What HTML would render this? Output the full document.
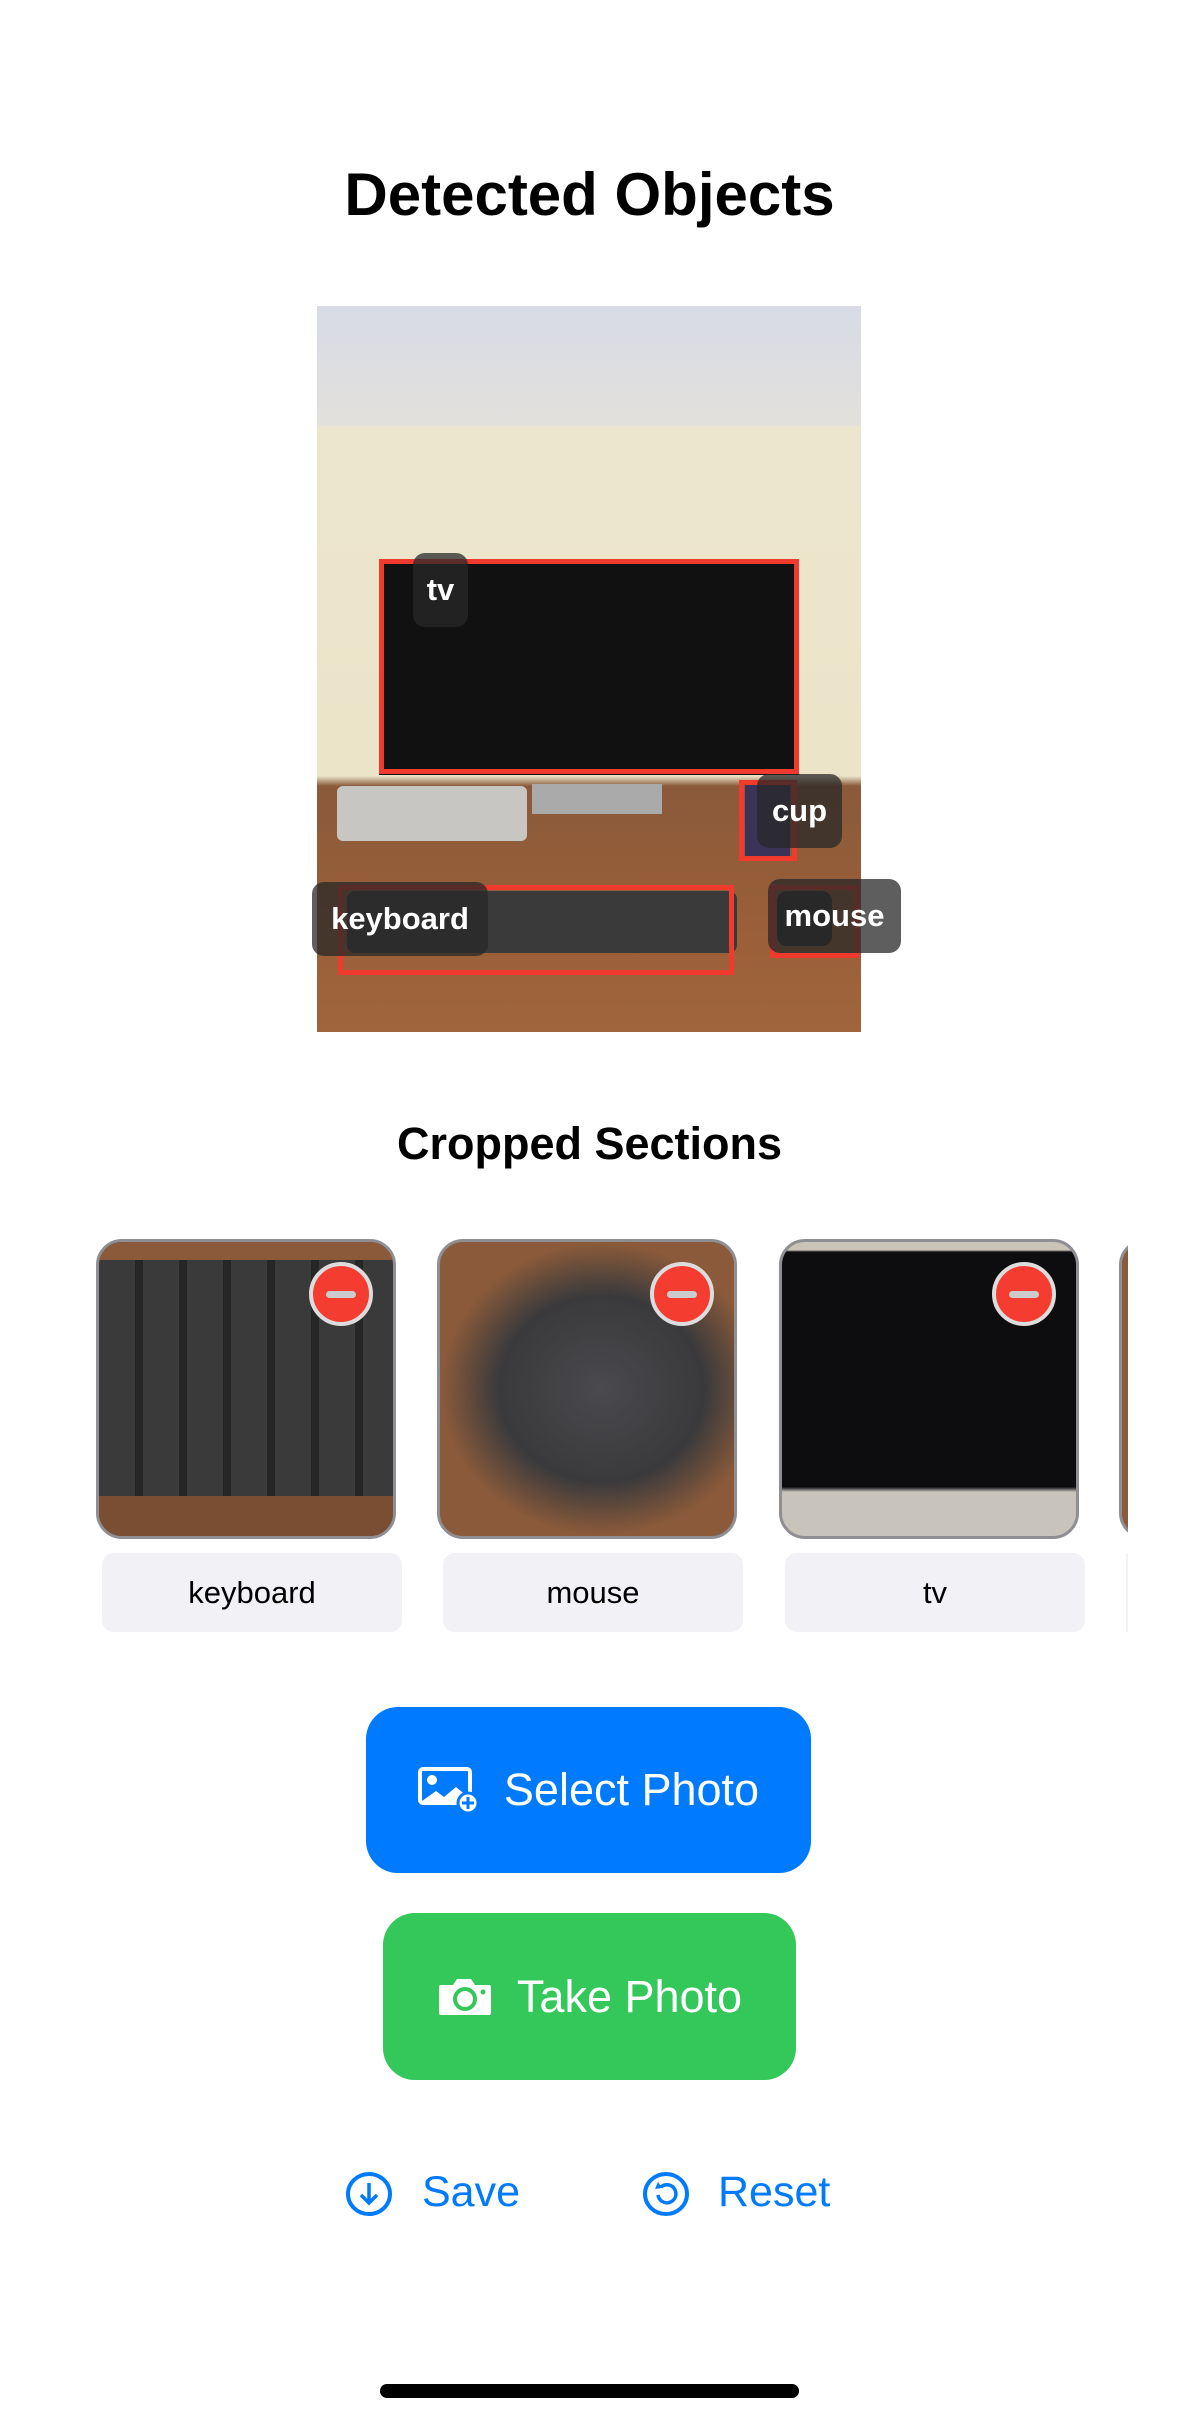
<!DOCTYPE html>
<html><head><meta charset="utf-8"><style>
*{margin:0;padding:0;box-sizing:border-box}
body{width:1179px;height:2425px;background:#fff;position:relative;overflow:hidden;font-family:"Liberation Sans",sans-serif}
.a{position:absolute}
.lbl{position:absolute;background:rgba(40,40,40,.75);color:#fff;font-weight:bold;font-size:31px;border-radius:12px;display:flex;align-items:center;justify-content:center}
.box{position:absolute;border:5px solid #f03a2e}
.th{position:absolute;top:1239px;width:300px;height:300px;border-radius:26px;border:3px solid #8e8e93;overflow:hidden}
.rm{position:absolute;right:20px;top:20px;width:64px;height:64px;border-radius:50%;background:#f53c31;border:4px solid #ddd}
.rm:after{content:"";position:absolute;left:13px;top:25px;width:30px;height:7px;border-radius:4px;background:#ccc}
.tl{position:absolute;top:1553px;width:300px;height:79px;background:#f1f1f6;border-radius:12px;font-size:31px;display:flex;align-items:center;justify-content:center;color:#000}
.btn{position:absolute;border-radius:32px;color:#fff;font-size:45px;display:flex;align-items:center;justify-content:center;gap:24px}
</style></head><body>
<div class="a" style="top:160px;width:1179px;text-align:center;font-size:60px;font-weight:bold">Detected Objects</div>

<div class="a" style="left:317px;top:306px;width:544px;height:726px;overflow:hidden;background:linear-gradient(#d8dbe6 0,#e2e0dc 118px,#ede6cf 122px,#ebe4c8 470px,#8a5a3a 480px,#9a5f38 620px,#a0653c 726px)">
  <div class="a" style="left:62px;top:253px;width:420px;height:216px;background:#111"></div>
  <div class="a" style="left:20px;top:480px;width:190px;height:55px;background:#c8c6c2;border-radius:6px"></div>
  <div class="a" style="left:215px;top:478px;width:130px;height:30px;background:#aaa"></div>
  <div class="a" style="left:30px;top:585px;width:390px;height:62px;background:#3a3a3a;border-radius:8px"></div>
  <div class="a" style="left:460px;top:585px;width:55px;height:55px;background:#2a2a2a;border-radius:10px"></div>
  <div class="a" style="left:428px;top:478px;width:45px;height:75px;background:#3b3458"></div>
</div>
<div class="box" style="left:379px;top:559px;width:420px;height:215px"></div>
<div class="lbl" style="left:413px;top:553px;width:55px;height:74px">tv</div>
<div class="box" style="left:739px;top:780px;width:58px;height:81px"></div>
<div class="lbl" style="left:757px;top:774px;width:85px;height:74px">cup</div>
<div class="box" style="left:338px;top:885px;width:396px;height:90px"></div>
<div class="lbl" style="left:312px;top:882px;width:176px;height:74px">keyboard</div>
<div class="box" style="left:770px;top:885px;width:89px;height:73px"></div>
<div class="lbl" style="left:768px;top:879px;width:133px;height:74px">mouse</div>

<div class="a" style="top:1118px;width:1179px;text-align:center;font-size:45px;font-weight:bold">Cropped Sections</div>

<div class="th" style="left:96px;background:repeating-linear-gradient(90deg,#3a3a3a 0,#3a3a3a 36px,#262626 36px,#262626 44px),#333"><div class="a" style="left:0;top:0;width:300px;height:18px;background:#8a5a3a"></div><div class="a" style="left:0;bottom:0;width:300px;height:40px;background:#7a4e33"></div><div class="rm"></div></div>
<div class="th" style="left:437px;background:radial-gradient(ellipse at 55% 50%,#4a4a4e 0,#3a3a3c 45%,#8a5a3a 70%)"><div class="rm"></div></div>
<div class="th" style="left:779px;background:linear-gradient(#c9c3b8 0,#c9c3b8 8px,#0d0d10 10px,#0d0d10 245px,#c8c4bc 250px)"><div class="rm"></div></div>
<div class="th" style="left:1119px;background:#8a5a3a"></div>
<div class="a" style="left:1128px;top:1230px;width:51px;height:420px;background:#fff"></div>

<div class="tl" style="left:102px">keyboard</div>
<div class="tl" style="left:443px">mouse</div>
<div class="tl" style="left:785px">tv</div>
<div class="tl" style="left:1126px;width:2px"></div>

<div class="btn" style="left:366px;top:1707px;width:445px;height:166px;background:#007aff">
<svg width="62" height="46" viewBox="0 0 62 46"><rect x="2" y="2" width="50" height="34" rx="3" fill="none" stroke="#fff" stroke-width="4"/><circle cx="14" cy="13" r="5" fill="#fff"/><path d="M4 34 L18 24 L26 30 L38 20 L50 30 L50 34Z" fill="#fff"/><circle cx="50" cy="36" r="10" fill="#fff" stroke="#007aff" stroke-width="3"/><path d="M50 30v12M44 36h12" stroke="#007aff" stroke-width="3"/></svg>
<span>Select Photo</span></div>
<div class="btn" style="left:383px;top:1913px;width:413px;height:167px;background:#34c759">
<svg width="56" height="40" viewBox="0 0 56 40"><path d="M4 8h12l4-6h14l4 6h14a2 2 0 0 1 2 2v26a2 2 0 0 1-2 2H4a2 2 0 0 1-2-2V10a2 2 0 0 1 2-2z" fill="#fff"/><circle cx="28" cy="22" r="10" fill="none" stroke="#34c759" stroke-width="4"/><circle cx="46" cy="15" r="2.5" fill="#34c759"/></svg>
<span>Take Photo</span></div>

<svg class="a" style="left:345px;top:2171px" width="48" height="46" viewBox="0 0 48 46"><ellipse cx="24" cy="23" rx="21" ry="20" fill="none" stroke="#007aff" stroke-width="4"/><path d="M24 12v20M16 24l8 8 8-8" fill="none" stroke="#007aff" stroke-width="3.5"/></svg>
<div class="a" style="left:422px;top:2168px;font-size:43px;color:#007aff">Save</div>
<svg class="a" style="left:642px;top:2171px" width="48" height="46" viewBox="0 0 48 46"><ellipse cx="24" cy="23" rx="21" ry="20" fill="none" stroke="#007aff" stroke-width="4"/><path d="M19 16a9 9 0 1 1-3 8" fill="none" stroke="#007aff" stroke-width="3.5"/><path d="M16 11l4 6-7 1z" fill="#007aff"/></svg>
<div class="a" style="left:718px;top:2168px;font-size:43px;color:#007aff">Reset</div>

<div class="a" style="left:380px;top:2384px;width:419px;height:14px;border-radius:7px;background:#000"></div>
</body></html>
